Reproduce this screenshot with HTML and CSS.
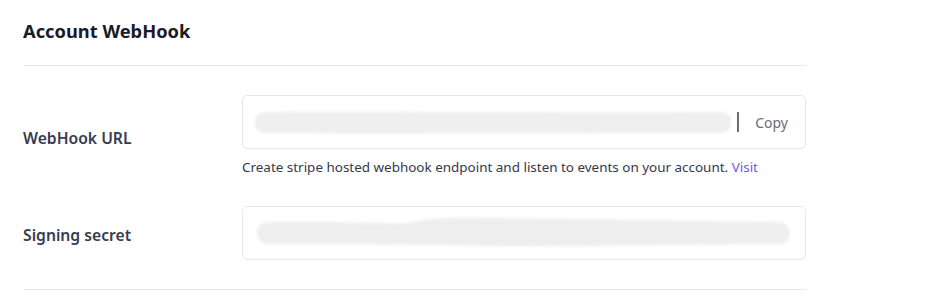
FILE: index.html
```html
<!DOCTYPE html>
<html lang="en">
<head>
    <meta charset="UTF-8">
    <meta name="viewport" content="width=device-width, initial-scale=1.0">
    <title>Account WebHook</title>
    <link rel="stylesheet" href="styles.css">
</head>
<body>
    <section class="panel">
        <h2 class="panel-title">Account WebHook</h2>

        <div class="form-row">
            <label class="form-label">WebHook URL</label>
            <div class="form-field">
                <div class="input-box">
                    <div class="smudge">
                        <svg width="480" height="30" viewBox="0 0 480 30">
                            <defs>
                                <filter id="blurA" x="-5%" y="-50%" width="110%" height="200%">
                                    <feGaussianBlur stdDeviation="1.6"/>
                                </filter>
                            </defs>
                            <path filter="url(#blurA)" fill="#efefef"
                                  d="M12 5 C120 4 300 6 468 5 A10 10 0 0 1 468 26 C300 26 120 27 12 26 A10.5 10.5 0 0 1 12 5 Z"/>
                        </svg>
                    </div>
                    <span class="divider-bar"></span>
                    <button class="copy-btn">Copy</button>
                </div>
                <p class="help-text">Create stripe hosted webhook endpoint and listen to events on your account. <a href="#">Visit</a></p>
            </div>
        </div>

        <div class="form-row">
            <label class="form-label">Signing secret</label>
            <div class="form-field">
                <div class="input-box input-box--secret">
                    <div class="smudge">
                        <svg width="540" height="40" viewBox="0 0 540 40">
                            <defs>
                                <filter id="blurB" x="-5%" y="-50%" width="110%" height="200%">
                                    <feGaussianBlur stdDeviation="1.8"/>
                                </filter>
                            </defs>
                            <path filter="url(#blurB)" fill="#eeeeee"
                                  d="M14 9 C60 8 120 10 150 10 C165 9 170 5 200 5 C330 5 420 8 525 9 A11 11 0 0 1 525 31 C420 31 330 34 230 33 C150 31 80 31 14 31 A11 11 0 0 1 14 9 Z"/>
                        </svg>
                    </div>
                </div>
            </div>
        </div>
    </section>
</body>
</html>
```

FILE: styles.css
```css
* {
    box-sizing: border-box;
}

body {
    margin: 0;
    background: #fff;
    font-family: "Noto Sans", "Open Sans", sans-serif;
    color: #333a4d;
}

.panel {
    width: 806px;
    padding-left: 23px;
}

.panel-title {
    margin: 0;
    padding: 19px 0 22px;
    font-size: 18.3px;
    line-height: 24px;
    font-weight: 700;
    color: #1a1a28;
    border-bottom: 1px solid #e6e8ee;
}

.form-row {
    display: grid;
    grid-template-columns: 219px 1fr;
    align-items: center;
    padding: 29px 0 0;
}

.form-row:last-child {
    padding-bottom: 29px;
    border-bottom: 1px solid #e6e8ee;
}

.form-label {
    padding-top: 3px;
    font-size: 15.7px;
    font-weight: 600;
    color: #363c52;
}

.input-box {
    height: 54px;
    display: flex;
    align-items: center;
    padding: 0 17px 0 10px;
    border: 1px solid #e4e6ec;
    border-radius: 5px;
}

.input-box--secret {
    padding: 0 0 0 11px;
}

.smudge {
    flex: 1;
    display: flex;
    align-items: center;
    min-width: 0;
}

.smudge svg {
    display: block;
}

.divider-bar {
    width: 2px;
    height: 20px;
    background: #6b6d78;
    margin: 0 16px 0 4px;
}

.copy-btn {
    border: none;
    background: none;
    padding: 0;
    font-family: inherit;
    font-size: 14px;
    color: #6b6d78;
    cursor: pointer;
}

.help-text {
    margin: 8px 0 0;
    font-size: 13.45px;
    line-height: 20px;
    color: #343a4a;
}

.help-text a {
    color: #6a5cf0;
    text-decoration: none;
}
```
